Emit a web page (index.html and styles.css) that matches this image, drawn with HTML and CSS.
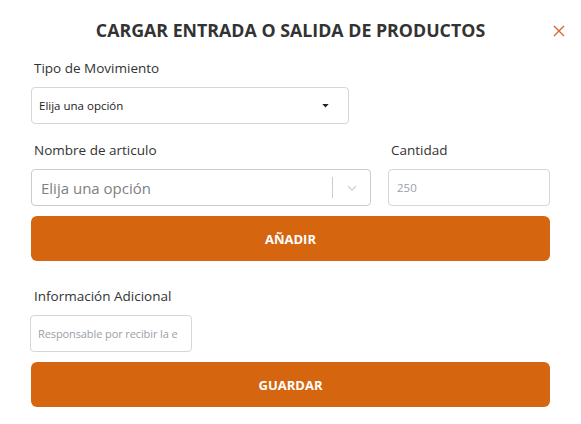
FILE: index.html
```html
<!DOCTYPE html>
<html lang="es">
<head>
<meta charset="utf-8">
<link rel="stylesheet" href="styles.css">
</head>
<body>
<div class="modal">
  <div class="header">
    <h1 class="title">CARGAR ENTRADA O SALIDA DE PRODUCTOS</h1>
    <button class="close" aria-label="Cerrar">
      <svg width="12" height="12" viewBox="0 0 12 12"><path d="M1 1L11 11M11 1L1 11" stroke="#E0612E" stroke-width="1.4" fill="none"/></svg>
    </button>
  </div>
  <div class="form">
    <label class="label">Tipo de Movimiento</label>
    <div class="select select-native">
      <span class="select-text">Elija una opción</span>
      <svg class="caret" width="7" height="4" viewBox="0 0 8 5"><path d="M0 0H8L4 4.5Z" fill="#222"/></svg>
    </div>

    <div class="row">
      <div class="col col-name">
        <label class="label">Nombre de articulo</label>
        <div class="select select-react">
          <span class="react-placeholder">Elija una opción</span>
          <span class="sep"></span>
          <svg class="chev" width="14" height="14" viewBox="0 0 20 20"><path d="M4.5 7.5L10 13L15.5 7.5" stroke="#ccc" stroke-width="1.6" fill="none"/></svg>
        </div>
      </div>
      <div class="col col-qty">
        <label class="label">Cantidad</label>
        <div class="input"><span class="ph">250</span></div>
      </div>
    </div>

    <button class="btn btn-add">AÑADIR</button>

    <label class="label label-info">Información Adicional</label>
    <div class="input input-info"><span class="ph ph-info">Responsable por recibir la e</span></div>

    <button class="btn btn-save">GUARDAR</button>
  </div>
</div>
</body>
</html>
```

FILE: styles.css
```css
* { box-sizing: border-box; }
body {
  margin: 0;
  background: #fff;
  font-family: "Open Sans", "Noto Sans", sans-serif;
  color: #333;
}
.modal {
  width: 581px;
  height: 424px;
  padding: 0 31px 0 31px;
}
.header {
  position: relative;
  height: 58px;
  display: flex;
  align-items: center;
  justify-content: center;
  padding-top: 2px;
}
.title {
  margin: 0;
  font-size: 17.8px;
  font-weight: 700;
  color: #333;
  letter-spacing: 0;
}
.close {
  position: absolute;
  right: -16px;
  top: 25px;
  border: 0;
  background: none;
  padding: 0;
  width: 13px;
  height: 13px;
  display: flex;
}
.form {
  display: flex;
  flex-direction: column;
}
.label {
  display: block;
  font-size: 13.5px;
  line-height: 20px;
  color: #333;
  padding-left: 3px;
  margin-bottom: 9px;
}
.select {
  height: 37px;
  border: 1px solid #ccc;
  border-radius: 4px;
  display: flex;
  align-items: center;
}
.select-native {
  width: 318px;
  padding: 0 19px 0 7px;
  justify-content: space-between;
  border-color: #d6d6d6;
}
.select-text {
  font-size: 11.5px;
  color: #222;
  font-weight: 500;
}
.row {
  display: flex;
  gap: 17px;
  margin-top: 16px;
}
.col-name { width: 340px; }
.col-qty { width: 162px; }
.select-react {
  padding: 0 0 0 9px;
  border-color: #ccc;
}
.react-placeholder {
  flex: 1;
  font-size: 15px;
  color: #808080;
}
.sep {
  width: 1px;
  height: 21px;
  background: #ccc;
}
.chev {
  margin: 0 11px 0 12px;
}
.input {
  height: 37px;
  border: 1px solid #d6d6d6;
  border-radius: 4px;
  display: flex;
  align-items: center;
  padding: 0 8px;
}
.ph {
  font-size: 11.5px;
  color: #9aa0a8;
  white-space: nowrap;
  overflow: hidden;
}
.ph-info {
  font-size: 11px;
  letter-spacing: -0.1px;
}
.btn {
  height: 45px;
  border: 0;
  border-radius: 6px;
  background: #d5650f;
  color: #fff;
  font-family: inherit;
  font-weight: 700;
  font-size: 13px;
  width: 100%;
}
.btn-add { margin-top: 10px; }
.label-info { margin-top: 25px; }
.input-info {
  width: 162px;
  margin-left: -1px;
  padding: 0 6px 0 7px;
}
.btn-save { margin-top: 10px; }
```
